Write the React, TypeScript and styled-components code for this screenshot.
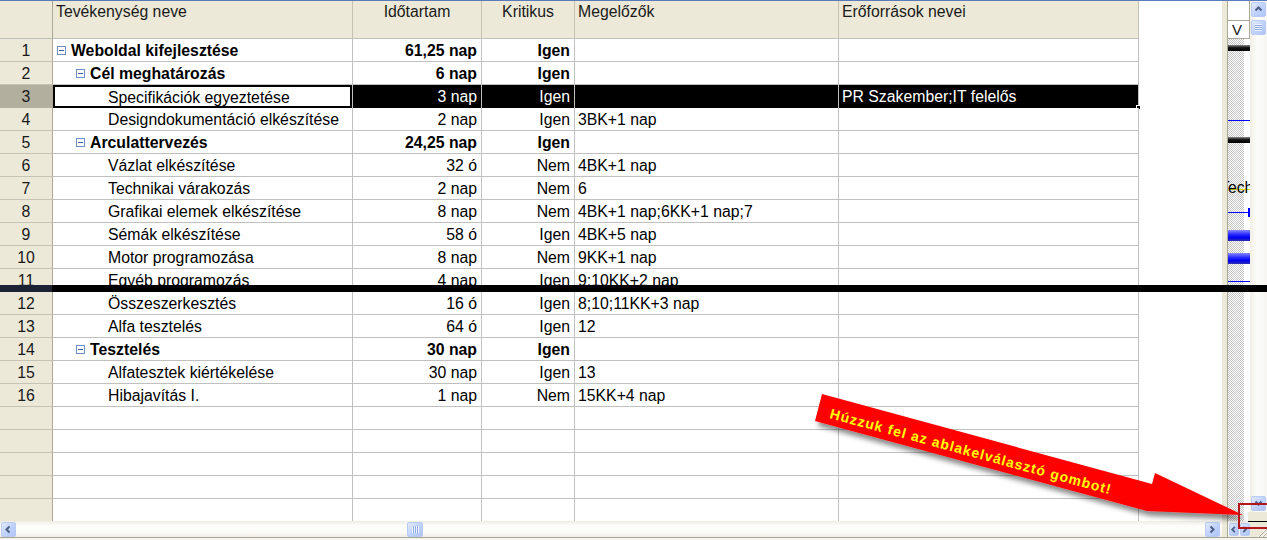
import React from 'react'
import styled, { createGlobalStyle, css } from 'styled-components'

const GlobalStyle = createGlobalStyle`
  html, body {
    margin: 0;
    padding: 0;
    background: #fff;
  }
  body {
    font-family: 'Liberation Sans', Arial, sans-serif;
  }
`

type Task = {
  id: number
  name: string
  level: number
  summary?: boolean
  duration: string
  critical: string
  pred: string
  res?: string
  selected?: boolean
}

type GanttKind = 'none' | 'summary' | 'line' | 'label' | 'link' | 'bar'

const tasks: Task[] = [
  { id: 1, name: 'Weboldal kifejlesztése', level: 1, summary: true, duration: '61,25 nap', critical: 'Igen', pred: '' },
  { id: 2, name: 'Cél meghatározás', level: 2, summary: true, duration: '6 nap', critical: 'Igen', pred: '' },
  { id: 3, name: 'Specifikációk egyeztetése', level: 3, duration: '3 nap', critical: 'Igen', pred: '', res: 'PR Szakember;IT felelős', selected: true },
  { id: 4, name: 'Designdokumentáció elkészítése', level: 3, duration: '2 nap', critical: 'Igen', pred: '3BK+1 nap' },
  { id: 5, name: 'Arculattervezés', level: 2, summary: true, duration: '24,25 nap', critical: 'Igen', pred: '' },
  { id: 6, name: 'Vázlat elkészítése', level: 3, duration: '32 ó', critical: 'Nem', pred: '4BK+1 nap' },
  { id: 7, name: 'Technikai várakozás', level: 3, duration: '2 nap', critical: 'Nem', pred: '6' },
  { id: 8, name: 'Grafikai elemek elkészítése', level: 3, duration: '8 nap', critical: 'Nem', pred: '4BK+1 nap;6KK+1 nap;7' },
  { id: 9, name: 'Sémák elkészítése', level: 3, duration: '58 ó', critical: 'Igen', pred: '4BK+5 nap' },
  { id: 10, name: 'Motor programozása', level: 3, duration: '8 nap', critical: 'Nem', pred: '9KK+1 nap' },
  { id: 11, name: 'Egyéb programozás', level: 3, duration: '4 nap', critical: 'Igen', pred: '9;10KK+2 nap' },
  { id: 12, name: 'Összeszerkesztés', level: 3, duration: '16 ó', critical: 'Igen', pred: '8;10;11KK+3 nap' },
  { id: 13, name: 'Alfa tesztelés', level: 3, duration: '64 ó', critical: 'Igen', pred: '12' },
  { id: 14, name: 'Tesztelés', level: 2, summary: true, duration: '30 nap', critical: 'Igen', pred: '' },
  { id: 15, name: 'Alfatesztek kiértékelése', level: 3, duration: '30 nap', critical: 'Igen', pred: '13' },
  { id: 16, name: 'Hibajavítás I.', level: 3, duration: '1 nap', critical: 'Nem', pred: '15KK+4 nap' },
]

const gantt: GanttKind[] = [
  'summary', 'none', 'none', 'line', 'summary', 'none', 'label', 'link',
  'bar', 'bar', 'line', 'none', 'none', 'none', 'none', 'none',
  'none', 'none', 'none', 'none', 'none',
]

const EMPTY_ROWS = 5

const Frame = styled.div`
  position: relative;
  width: 1267px;
  height: 540px;
  overflow: hidden;
  border-top: 1px solid #5b7bbb;
  box-sizing: border-box;
  background: #fff;
  font-family: 'Liberation Sans', Arial, sans-serif;
  font-size: 15.8px;
  color: #000;
`

const Main = styled.div`
  display: flex;
  height: 536px;
`

const Footer = styled.div`
  height: 3px;
  border-top: 1px solid #a7a596;
  background: #f6f5f0;
  box-sizing: border-box;
`

const TablePane = styled.div`
  width: 1222px;
  display: flex;
  flex-direction: column;
`

const Sheet = styled.div`
  flex: 1;
  overflow: hidden;
`

const GridRow = styled.div<{ $header?: boolean }>`
  display: grid;
  grid-template-columns: 53px 300px 129px 93px 264px 300px 1fr;
  height: ${(p) => (p.$header ? '38px' : '23px')};
`

const Cell = styled.div<{ $align?: 'left' | 'right' | 'center'; $bold?: boolean; $dark?: boolean }>`
  box-sizing: border-box;
  border-right: 1px solid #c0c0c0;
  border-bottom: 1px solid #c0c0c0;
  line-height: 22px;
  white-space: nowrap;
  overflow: hidden;
  padding: 1px 4px 0 3px;
  text-align: ${(p) => p.$align || 'left'};
  font-weight: ${(p) => (p.$bold ? 'bold' : 'normal')};
  background: ${(p) => (p.$dark ? '#000' : '#fff')};
  color: ${(p) => (p.$dark ? '#fff' : '#000')};
`

const ResCell = styled(Cell)`
  position: relative;
  overflow: visible;

  ${(p) =>
    p.$dark &&
    css`
      &::after {
        content: '';
        position: absolute;
        right: -3px;
        bottom: -2px;
        width: 3px;
        height: 3px;
        background: #000;
        border: 1px solid #fff;
      }
    `}
`

const HeadCell = styled.div<{ $align?: 'left' | 'center' }>`
  box-sizing: border-box;
  background: #ece9d8;
  border-right: 1px solid #c5c2b2;
  border-bottom: 1px solid #c0c0c0;
  padding: 2px 3px 0;
  line-height: 18px;
  color: #1a1a1a;
  white-space: nowrap;
  overflow: hidden;
  text-align: ${(p) => p.$align || 'left'};
`

const RowNum = styled.div<{ $selected?: boolean }>`
  box-sizing: border-box;
  background: ${(p) => (p.$selected ? '#b3af9e' : '#ece9d8')};
  border-right: 1px solid #aca899;
  border-bottom: 1px solid #c6c3b4;
  padding-top: 1px;
  text-align: center;
  line-height: 22px;
  overflow: hidden;
  color: #1a1a1a;
`

const Corner = styled.div`
  box-sizing: border-box;
  background: #ece9d8;
  border-right: 1px solid #aca899;
  border-bottom: 1px solid #c0c0c0;
`

const Blank = styled.div`
  background: #fff;
`

const NameCell = styled.div<{ $indent: number; $bold?: boolean; $active?: boolean }>`
  box-sizing: border-box;
  display: flex;
  align-items: center;
  gap: 5px;
  padding: 2px 0 0 ${(p) => p.$indent}px;
  border-right: 1px solid #c0c0c0;
  border-bottom: 1px solid #c0c0c0;
  white-space: nowrap;
  overflow: hidden;
  line-height: 20px;
  font-weight: ${(p) => (p.$bold ? 'bold' : 'normal')};
  background: #fff;
  ${(p) =>
    p.$active &&
    css`
      box-shadow: inset 0 0 0 2px #000;
      border-bottom-color: #000;
    `}
`

const Toggle = styled.span`
  box-sizing: border-box;
  width: 9px;
  height: 9px;
  flex: none;
  margin-top: -1px;
  border: 1px solid #6f8fc4;
  background: #fff;
  display: flex;
  align-items: center;
  justify-content: center;

  &::before {
    content: '';
    width: 5px;
    height: 1px;
    background: #3f5f9a;
  }
`

const Splitter = styled.div`
  width: 5px;
  background: #ece9d8;
  border-right: 1px solid #aca899;
`

const GanttPane = styled.div`
  width: 22px;
  display: flex;
  flex-direction: column;
`

const GanttTier = styled.div<{ $h: number }>`
  box-sizing: border-box;
  height: ${(p) => p.$h}px;
  border-bottom: 1px solid #aca899;
  border-right: 1px solid #aca899;
  background: #fff;
  padding-left: 4px;
  line-height: 17px;
  font-size: 15px;
  color: #1a1a1a;
`

const GanttBody = styled.div`
  flex: 1;
  overflow: hidden;
  background:
    linear-gradient(to right, transparent 16px, #fff 16px),
    repeating-conic-gradient(#c6c6c6 0 25%, #fff 0 50%) 0 0 / 2px 2px;
`

const lineAt = (color: string) => css`
  background: linear-gradient(${color}, ${color}) 0 12px / 100% 1px no-repeat;
`

const GanttRow = styled.div<{ $kind: GanttKind }>`
  height: 23px;
  display: flex;
  flex-direction: column;
  ${(p) => (p.$kind === 'line' || p.$kind === 'link') && lineAt('#0000ff')}
  ${(p) => p.$kind === 'label' && lineAt('#e0e000')}
  ${(p) =>
    p.$kind === 'link' &&
    css`
      align-items: flex-end;
    `}
`

const SummaryBar = styled.div`
  margin-top: 6px;
  height: 6px;
  background: linear-gradient(#8a8a8a, #111 45%, #000);
`

const TaskBar = styled.div`
  margin-top: 7px;
  height: 11px;
  background: linear-gradient(#8a8aff, #2a2aff 40%, #0000f0 70%, #3030b0);
`

const LinkEnd = styled.div`
  margin-top: 8px;
  width: 2px;
  height: 9px;
  background: #0000ff;
`

const BarLabel = styled.div`
  margin-left: -8px;
  line-height: 22px;
  color: #000;
  white-space: nowrap;
`

const VScroll = styled.div`
  width: 17px;
  display: flex;
  flex-direction: column;
  align-items: center;
  background: linear-gradient(to right, #f1efe6, #fcfcfa 40%, #f7f6f1);
`

const Track = styled.div`
  flex: 1;
`

const ScrollBtn = styled.div<{ $w?: number; $h?: number; $gap?: number }>`
  box-sizing: border-box;
  width: ${(p) => p.$w || 15}px;
  height: ${(p) => p.$h || 15}px;
  margin-top: ${(p) => p.$gap || 0}px;
  flex: none;
  border: 1px solid #b9cbf3;
  border-radius: 2px;
  background: linear-gradient(135deg, #e2ebfe, #c1d3fb 50%, #adc4f6);
  display: flex;
  align-items: center;
  justify-content: center;
`

const SplitBox = styled.div`
  align-self: stretch;
  height: 9px;
  margin-top: 1px;
  margin-left: -2px;
  background: #ece9d8;
  border-bottom: 1px solid #000;
`

const CornerGrip = styled.div`
  align-self: stretch;
  height: 15px;
  display: flex;
  align-items: flex-end;
  justify-content: flex-end;
  background: #ece9d8;
`

const HScroll = styled.div`
  height: 16px;
  display: flex;
  align-items: center;
  padding: 0 1px;
  background: linear-gradient(#eeede5, #fdfdfb 30%, #fbfbf8 70%, #efeee7);
`

const HTrack = styled.div<{ $w: number }>`
  width: ${(p) => p.$w}px;
  flex: none;
`

const GanttScroll = styled.div`
  height: 16px;
  display: flex;
  align-items: center;
  gap: 1px;
  padding-left: 1px;
  background: linear-gradient(#eeede5, #fdfdfb 30%, #fbfbf8 70%, #efeee7);
`

const Divider = styled.div`
  position: absolute;
  left: 0;
  top: 284px;
  width: 100%;
  height: 7px;
  background: linear-gradient(to right, #1c2234 0, #1c2234 52px, #000 52px);
`

const Callout = styled.svg`
  position: absolute;
  left: 0;
  top: -1px;
  pointer-events: none;
`

const Chevron = ({ dir }: { dir: 'up' | 'down' | 'left' | 'right' }) => {
  const paths = {
    up: 'M1.5 5.5 L4.5 2.5 L7.5 5.5',
    down: 'M1.5 2.5 L4.5 5.5 L7.5 2.5',
    left: 'M5.5 1.5 L2.5 4.5 L5.5 7.5',
    right: 'M2.5 1.5 L5.5 4.5 L2.5 7.5',
  }
  return (
    <svg width="9" height="9" viewBox="0 0 9 9">
      <path d={paths[dir]} fill="none" stroke="#4d6185" strokeWidth="2" />
    </svg>
  )
}

const Grip = ({ vertical }: { vertical?: boolean }) => (
  <svg width="7" height="7" viewBox="0 0 7 7">
    {[0, 2, 4, 6].map((i) =>
      vertical ? (
        <line key={i} x1="0" x2="7" y1={i + 0.5} y2={i + 0.5} stroke="#eef3fe" />
      ) : (
        <line key={i} y1="0" y2="7" x1={i + 0.5} x2={i + 0.5} stroke="#eef3fe" />
      ),
    )}
    {[1, 3, 5].map((i) =>
      vertical ? (
        <line key={'d' + i} x1="0" x2="7" y1={i + 0.5} y2={i + 0.5} stroke="#8caae6" />
      ) : (
        <line key={'d' + i} y1="0" y2="7" x1={i + 0.5} x2={i + 0.5} stroke="#8caae6" />
      ),
    )}
  </svg>
)

const ResizeGrip = () => (
  <svg width="12" height="12" viewBox="0 0 12 12">
    {[3, 7, 11].map((o) => (
      <g key={o}>
        <line x1={o} y1="12" x2="12" y2={o} stroke="#fff" strokeWidth="1" />
        <line x1={o + 1} y1="12" x2="12" y2={o + 1} stroke="#b3b0a2" strokeWidth="1" />
      </g>
    ))}
  </svg>
)

const GanttCell = ({ kind }: { kind: GanttKind }) => (
  <GanttRow $kind={kind}>
    {kind === 'summary' && <SummaryBar />}
    {kind === 'bar' && <TaskBar />}
    {kind === 'label' && <BarLabel>Tech</BarLabel>}
    {kind === 'link' && <LinkEnd />}
  </GanttRow>
)

const TaskRow = ({ t }: { t: Task }) => {
  const indent = t.summary ? 4 + (t.level - 1) * 19 : 55
  return (
    <GridRow>
      <RowNum $selected={t.selected}>{t.id}</RowNum>
      <NameCell $indent={indent} $bold={t.summary} $active={t.selected}>
        {t.summary && <Toggle />}
        {t.name}
      </NameCell>
      <Cell $align="right" $bold={t.summary} $dark={t.selected}>
        {t.duration}
      </Cell>
      <Cell $align="right" $bold={t.summary} $dark={t.selected}>
        {t.critical}
      </Cell>
      <Cell $dark={t.selected}>{t.pred}</Cell>
      <ResCell $dark={t.selected}>{t.res}</ResCell>
      <Blank />
    </GridRow>
  )
}

const App: React.FC = () => (
  <>
    <GlobalStyle />
    <Frame>
      <Main>
        <TablePane>
          <Sheet>
            <GridRow $header>
              <Corner />
              <HeadCell>Tevékenység neve</HeadCell>
              <HeadCell $align="center">Időtartam</HeadCell>
              <HeadCell $align="center">Kritikus</HeadCell>
              <HeadCell>Megelőzők</HeadCell>
              <HeadCell>Erőforrások nevei</HeadCell>
              <Blank />
            </GridRow>
            {tasks.map((t) => (
              <TaskRow key={t.id} t={t} />
            ))}
            {Array.from({ length: EMPTY_ROWS }).map((_, i) => (
              <GridRow key={'e' + i}>
                <RowNum />
                <Cell />
                <Cell />
                <Cell />
                <Cell />
                <Cell />
                <Blank />
              </GridRow>
            ))}
          </Sheet>
          <HScroll>
            <ScrollBtn>
              <Chevron dir="left" />
            </ScrollBtn>
            <HTrack $w={391} />
            <ScrollBtn $w={16}>
              <Grip />
            </ScrollBtn>
            <HTrack $w={782} />
            <ScrollBtn>
              <Chevron dir="right" />
            </ScrollBtn>
          </HScroll>
        </TablePane>
        <Splitter />
        <GanttPane>
          <GanttTier $h={20} />
          <GanttTier $h={18}>V</GanttTier>
          <GanttBody>
            {gantt.map((k, i) => (
              <GanttCell key={i} kind={k} />
            ))}
          </GanttBody>
          <GanttScroll>
            <ScrollBtn $w={10} $h={13}>
              <Chevron dir="left" />
            </ScrollBtn>
            <ScrollBtn $w={10} $h={13}>
              <Chevron dir="right" />
            </ScrollBtn>
          </GanttScroll>
        </GanttPane>
        <VScroll>
          <ScrollBtn $gap={1}>
            <Chevron dir="up" />
          </ScrollBtn>
          <ScrollBtn $gap={3}>
            <Grip vertical />
          </ScrollBtn>
          <Track />
          <ScrollBtn>
            <Chevron dir="down" />
          </ScrollBtn>
          <SplitBox />
          <CornerGrip>
            <ResizeGrip />
          </CornerGrip>
        </VScroll>
      </Main>
      <Footer />
      <Divider />
      <Callout width="1267" height="540" viewBox="0 0 1267 540">
        <defs>
          <filter id="arrowShadow" x="-5%" y="-20%" width="115%" height="160%">
            <feDropShadow dx="3" dy="5" stdDeviation="2.5" floodColor="#000" floodOpacity="0.45" />
          </filter>
        </defs>
        <polygon
          points="822,394 1152,484 1155,473 1243,515 1147,511 815,421"
          fill="#ff0000"
          filter="url(#arrowShadow)"
        />
        <text
          x="829"
          y="418"
          transform="rotate(15.2 829 418)"
          fill="#ffff00"
          fontFamily="'Liberation Sans', Arial, sans-serif"
          fontWeight="bold"
          fontSize="14"
          letterSpacing="1"
        >
          Húzzuk fel az ablakelválasztó gombot!
        </text>
        <rect x="1239" y="504" width="30" height="24" fill="none" stroke="#b3171c" strokeWidth="2" />
      </Callout>
    </Frame>
  </>
)

export default App
